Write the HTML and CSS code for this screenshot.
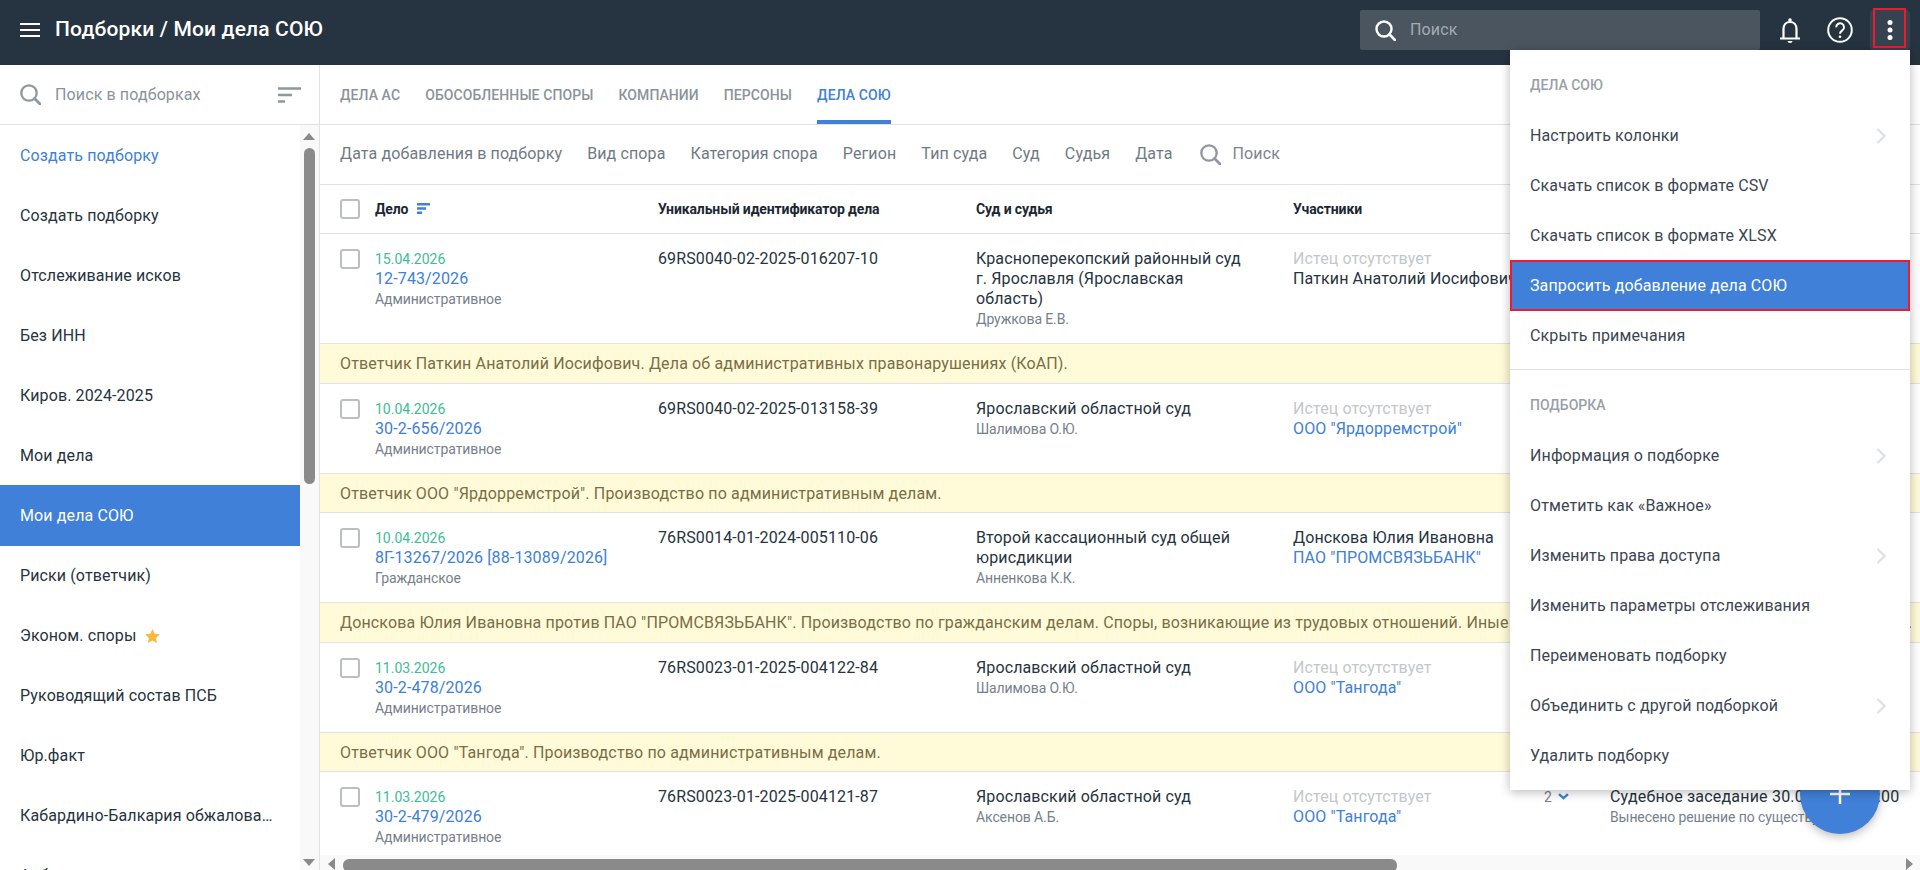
FILE: index.html
```html
<!DOCTYPE html>
<html lang="ru">
<head>
<meta charset="utf-8">
<title>Подборки / Мои дела СОЮ</title>
<link rel="stylesheet" href="styles.css">
</head>
<body>
<div class="app">
  <header class="topbar">
    <svg class="burger" width="20" height="14" viewBox="0 0 20 14"><path d="M0 1h20M0 7h20M0 13h20" stroke="#fff" stroke-width="2" fill="none"/></svg>
    <h1 class="title">Подборки / Мои дела СОЮ</h1>
    <div class="topsearch">
      <svg class="topsearch-icon" width="21" height="21" viewBox="0 0 21 21"><circle cx="9" cy="9" r="7.5" fill="none" stroke="#fff" stroke-width="2.4"/><path d="M14.5 14.5L20 20" stroke="#fff" stroke-width="2.6" stroke-linecap="round"/></svg>
      <span>Поиск</span>
    </div>
    <svg class="bell" width="20" height="25" viewBox="0 0 20 25"><path d="M3.5 20V11C3.500 7 6 4 10 4s6.500 3 6.500 7v9" fill="none" stroke="#fff" stroke-width="2.200"/><path d="M0.500 20.500h19" stroke="#fff" stroke-width="2.200" stroke-linecap="round"/><circle cx="10" cy="2" r="1.800" fill="#fff"/><path d="M7.500 23h5a2.500 2 0 0 1-5 0z" fill="#fff"/></svg>
    <svg class="help" width="26" height="26" viewBox="0 0 26 26"><circle cx="13" cy="13" r="11.800" fill="none" stroke="#fff" stroke-width="2"/><path d="M9.200 10.200a3.900 3.900 0 1 1 6.100 3.200c-1.500 1-2.300 1.700-2.300 3.300" fill="none" stroke="#fff" stroke-width="2"/><circle cx="13" cy="19.700" r="1.300" fill="#fff"/></svg>
    <div class="morebtn">
      <svg width="6" height="20" viewBox="0 0 6 20"><circle cx="3" cy="2.500" r="2.500" fill="#fff"/><circle cx="3" cy="10" r="2.500" fill="#fff"/><circle cx="3" cy="17.500" r="2.500" fill="#fff"/></svg>
      <span class="redbox"></span>
    </div>
  </header>

  <div class="body">
    <aside class="sidebar">
      <div class="side-search">
        <svg width="21" height="21" viewBox="0 0 21 21"><circle cx="9" cy="9" r="7.700" fill="none" stroke="#8f989f" stroke-width="2.300"/><path d="M14.500 14.500L20 20" stroke="#8f989f" stroke-width="2.800" stroke-linecap="round"/></svg>
        <span class="side-search-text">Поиск в подборках</span>
        <svg width="23" height="16" viewBox="0 0 23 16"><path d="M0 1.500h23M0 8h14M0 14.500h7" stroke="#8f989f" stroke-width="2.600" fill="none"/></svg>
      </div>
      <div class="side-body">
        <ul class="side-list">
          <li class="side-item side-item-link">Создать подборку</li>
          <li class="side-item">Создать подборку</li>
          <li class="side-item">Отслеживание исков</li>
          <li class="side-item">Без ИНН</li>
          <li class="side-item">Киров. 2024-2025</li>
          <li class="side-item">Мои дела</li>
          <li class="side-item side-item-active">Мои дела СОЮ</li>
          <li class="side-item">Риски (ответчик)</li>
          <li class="side-item">Эконом. споры
            <svg class="star" width="15" height="14" viewBox="0 0 24 23"><path d="M12 0l3.600 7.800 8.400 1-6.200 5.800 1.700 8.400L12 18.800 4.500 23l1.700-8.400L0 8.800l8.400-1z" fill="#f9b93c"/></svg>
          </li>
          <li class="side-item">Руководящий состав ПСБ</li>
          <li class="side-item">Юр.факт</li>
          <li class="side-item">Кабардино-Балкария обжалова…</li>
          <li class="side-item">Арбитраж</li>
        </ul>
        <div class="vscroll">
          <span class="arrow-up"></span>
          <span class="vthumb"></span>
          <span class="arrow-down"></span>
        </div>
      </div>
    </aside>

    <main class="content">
      <nav class="tabs">
        <span class="tab">Дела АС</span>
        <span class="tab">Обособленные споры</span>
        <span class="tab">Компании</span>
        <span class="tab">Персоны</span>
        <span class="tab tab-active">Дела СОЮ</span>
      </nav>
      <div class="filters">
        <span>Дата добавления в подборку</span>
        <span>Вид спора</span>
        <span>Категория спора</span>
        <span>Регион</span>
        <span>Тип суда</span>
        <span>Суд</span>
        <span>Судья</span>
        <span>Дата</span>
        <span class="filter-search">
          <svg width="21" height="21" viewBox="0 0 21 21"><circle cx="9" cy="9" r="7.700" fill="none" stroke="#8f989f" stroke-width="2.300"/><path d="M14.500 14.500L20 20" stroke="#8f989f" stroke-width="2.800" stroke-linecap="round"/></svg>
          Поиск
        </span>
      </div>

      <div class="table">
        <div class="grid thead">
          <div class="cell-first"><span class="check"></span><b>Дело</b>
            <svg class="thsort" width="13" height="11" viewBox="0 0 13 11"><path d="M0 1.200h13M0 5.500h9M0 9.800h5" stroke="#4080d8" stroke-width="2.400" fill="none"/></svg>
          </div>
          <b>Уникальный идентификатор дела</b>
          <b>Суд и судья</b>
          <b>Участники</b>
        </div>

        <div class="grid row row-tall">
          <div class="cell-first"><span class="check"></span>
            <div><div class="date">15.04.2026</div><div class="link">12-743/2026</div><div class="small">Административное</div></div>
          </div>
          <div>69RS0040-02-2025-016207-10</div>
          <div class="court">Красноперекопский районный суд г. Ярославля (Ярославская область)<div class="small">Дружкова Е.В.</div></div>
          <div class="nowrap"><div class="muted">Истец отсутствует</div>Паткин Анатолий Иосифович</div>
        </div>
        <div class="note">Ответчик Паткин Анатолий Иосифович. Дела об административных правонарушениях (КоАП).</div>

        <div class="grid row">
          <div class="cell-first"><span class="check"></span>
            <div><div class="date">10.04.2026</div><div class="link">30-2-656/2026</div><div class="small">Административное</div></div>
          </div>
          <div>69RS0040-02-2025-013158-39</div>
          <div class="court">Ярославский областной суд<div class="small">Шалимова О.Ю.</div></div>
          <div class="nowrap"><div class="muted">Истец отсутствует</div><div class="link">ООО "Ярдорремстрой"</div></div>
        </div>
        <div class="note note-short">Ответчик ООО "Ярдорремстрой". Производство по административным делам.</div>

        <div class="grid row">
          <div class="cell-first"><span class="check"></span>
            <div><div class="date">10.04.2026</div><div class="link">8Г-13267/2026 [88-13089/2026]</div><div class="small">Гражданское</div></div>
          </div>
          <div>76RS0014-01-2024-005110-06</div>
          <div class="court">Второй кассационный суд общей юрисдикции<div class="small">Анненкова К.К.</div></div>
          <div class="nowrap"><div>Донскова Юлия Ивановна</div><div class="link">ПАО "ПРОМСВЯЗЬБАНК"</div></div>
        </div>
        <div class="note note-long"><span>Донскова Юлия Ивановна против ПАО "ПРОМСВЯЗЬБАНК". Производство по гражданским делам. Споры, возникающие из трудовых отношений. Иные споры из трудовых</span><span>.</span></div>

        <div class="grid row">
          <div class="cell-first"><span class="check"></span>
            <div><div class="date">11.03.2026</div><div class="link">30-2-478/2026</div><div class="small">Административное</div></div>
          </div>
          <div>76RS0023-01-2025-004122-84</div>
          <div class="court">Ярославский областной суд<div class="small">Шалимова О.Ю.</div></div>
          <div class="nowrap"><div class="muted">Истец отсутствует</div><div class="link">ООО "Тангода"</div></div>
        </div>
        <div class="note note-short">Ответчик ООО "Тангода". Производство по административным делам.</div>

        <div class="grid row">
          <div class="cell-first"><span class="check"></span>
            <div><div class="date">11.03.2026</div><div class="link">30-2-479/2026</div><div class="small">Административное</div></div>
          </div>
          <div>76RS0023-01-2025-004121-87</div>
          <div class="court">Ярославский областной суд<div class="small">Аксенов А.Б.</div></div>
          <div class="nowrap"><div class="muted">Истец отсутствует</div><div class="link">ООО "Тангода"</div></div>
          <div class="count">2
            <svg width="11" height="7" viewBox="0 0 11 7"><path d="M1 1.200l4.500 4 4.500-4" fill="none" stroke="#4080d8" stroke-width="2.400"/></svg>
          </div>
          <div class="event">Судебное заседание 30.04.2026 10:00<div class="small">Вынесено решение по существу</div></div>
        </div>
      </div>

      <div class="hscroll">
        <span class="arrow-left"></span>
        <span class="hthumb"></span>
        <span class="arrow-right"></span>
      </div>
    </main>
  </div>

  <div class="fab">
    <svg width="20" height="20" viewBox="0 0 20 20"><path d="M10 0v20M0 10h20" stroke="#fff" stroke-width="2.500"/></svg>
  </div>

  <div class="menu">
    <div class="menu-group">
      <div class="menu-head">Дела СОЮ</div>
      <div class="menu-item">Настроить колонки
        <svg class="chev" width="10" height="16" viewBox="0 0 10 16"><path d="M1.500 1l7 7-7 7" fill="none" stroke="#dfe2e4" stroke-width="2.400"/></svg>
      </div>
      <div class="menu-item">Скачать список в формате CSV</div>
      <div class="menu-item">Скачать список в формате XLSX</div>
      <div class="menu-item menu-item-on">Запросить добавление дела СОЮ</div>
      <div class="menu-item">Скрыть примечания</div>
    </div>
    <div class="menu-group menu-group-last">
      <div class="menu-head">Подборка</div>
      <div class="menu-item">Информация о подборке
        <svg class="chev" width="10" height="16" viewBox="0 0 10 16"><path d="M1.500 1l7 7-7 7" fill="none" stroke="#dfe2e4" stroke-width="2.400"/></svg>
      </div>
      <div class="menu-item">Отметить как «Важное»</div>
      <div class="menu-item">Изменить права доступа
        <svg class="chev" width="10" height="16" viewBox="0 0 10 16"><path d="M1.500 1l7 7-7 7" fill="none" stroke="#dfe2e4" stroke-width="2.400"/></svg>
      </div>
      <div class="menu-item">Изменить параметры отслеживания</div>
      <div class="menu-item">Переименовать подборку</div>
      <div class="menu-item">Объединить с другой подборкой
        <svg class="chev" width="10" height="16" viewBox="0 0 10 16"><path d="M1.500 1l7 7-7 7" fill="none" stroke="#dfe2e4" stroke-width="2.400"/></svg>
      </div>
      <div class="menu-item">Удалить подборку</div>
    </div>
  </div>
</div>
</body>
</html>
```

FILE: styles.css
```css
* { box-sizing: border-box; }
html, body { margin: 0; height: 100%; overflow: hidden; }
body { font-family: Roboto, "Liberation Sans", sans-serif; font-size: 16px; line-height: 20px; color: #263340; background: #fff; letter-spacing: .12px; }
ul { list-style: none; margin: 0; padding: 0; }
svg { display: block; flex: none; }

.app { position: relative; width: 1920px; height: 870px; overflow: hidden; display: flex; flex-direction: column; }

/* top bar */
.topbar { height: 65px; flex: none; background: #263340; color: #fff; display: flex; align-items: center; padding-left: 20px; }
.burger { margin: -5px 15px 0 0; }
.title { margin: -7px 0 0; font-size: 21px; font-weight: 500; line-height: 24px; letter-spacing: .15px; flex: 1; }
.topsearch { width: 400px; height: 40px; margin-top: -5px; background: #4a5560; border-radius: 2px; display: flex; align-items: center; padding-left: 15px; color: #a4abb2; }
.topsearch-icon { margin-right: 14px; }
.bell { margin: -4px 0 0 20px; }
.help { margin: -6px 0 0 27px; }
.morebtn { position: relative; width: 40px; height: 40px; margin: -5px 10px 0 17px; background: #36424f; border-radius: 4px; display: flex; align-items: center; justify-content: center; }
.redbox { position: absolute; left: 3px; top: -2px; width: 33px; height: 40px; border: 2px solid #ec1c2e; }

/* layout */
.body { flex: 1; min-height: 0; display: flex; }
.sidebar { width: 320px; flex: none; border-right: 1px solid #e0e2e4; display: flex; flex-direction: column; }
.side-search { height: 60px; flex: none; border-bottom: 1px solid #e0e2e4; display: flex; align-items: center; padding: 0 18px 0 20px; color: #8a939a; }
.side-search-text { flex: 1; padding-left: 14px; }
.side-body { flex: 1; min-height: 0; display: flex; }
.side-list { width: 300px; flex: none; overflow: hidden; }
.side-item { height: 60px; padding: 2px 20px 0; display: flex; align-items: center; gap: 8px; white-space: nowrap; }
.side-item-link { color: #4080d8; }
.side-item-active { background: #4080d8; color: #fff; height: 61px; margin-bottom: -1px; padding-top: 0; }
.vscroll { flex: 1; background: #f9f9f9; position: relative; }
.vthumb { position: absolute; left: 4px; top: 23px; width: 11px; height: 336px; border-radius: 6px; background: #8a8a8a; }
.arrow-up, .arrow-down { position: absolute; left: 3px; width: 0; height: 0; border-left: 6.500px solid transparent; border-right: 6.500px solid transparent; }
.arrow-up { top: 8px; border-bottom: 7px solid #8a8a8a; }
.arrow-down { bottom: 4px; border-top: 7px solid #8a8a8a; }

/* content */
.content { flex: 1; min-width: 0; display: flex; flex-direction: column; }
.tabs { height: 60px; flex: none; border-bottom: 1px solid #e0e2e4; display: flex; gap: 25px; padding-left: 20px; }
.tab { height: 60px; line-height: 60px; font-size: 14px; font-weight: 500; text-transform: uppercase; color: #8a939a; letter-spacing: .09px; }
.tab-active { color: #4080d8; border-bottom: 4px solid #4080d8; height: 59px; }
.filters { height: 60px; flex: none; border-bottom: 1px solid #e0e2e4; display: flex; align-items: center; gap: 25px; padding: 0 20px 1px; color: #6f7a84; }
.filter-search { display: flex; align-items: center; gap: 12px; color: #7d868e; margin-left: 2px; }

.table { flex: 1; min-height: 0; overflow: hidden; }
.grid { display: grid; grid-template-columns: 338px 318px 317px 251px 66px 310px; }
.thead { height: 48.500px; border-bottom: 1px solid #e0e2e4; align-items: center; padding-top: 1px; font-size: 14px; letter-spacing: -.12px; }
.thead b { font-weight: 700; color: #1c2733; }
.cell-first { display: flex; padding-left: 20px; align-items: flex-start; }
.thead .cell-first { align-items: center; }
.check { width: 20px; height: 20px; flex: none; border: 2px solid #bcbfc2; border-radius: 3px; margin-right: 15px; }
.thsort { margin-left: 9px; margin-top: -2px; }
.row { height: 90px; padding-top: 15px; border-bottom: 1px solid #e0e2e4; color: #263340; }
.row-tall { height: 110px; }
.date { font-size: 14px; color: #3dbd96; letter-spacing: 0; }
.link { color: #4080d8; }
.small { font-size: 14px; color: #76818b; letter-spacing: -.1px; }
.court { padding-right: 48px; }
.muted { color: #c4c7ca; }
.nowrap { white-space: nowrap; }
.count { color: #76818b; font-size: 14px; display: flex; align-items: center; gap: 6px; height: 20px; }
.event { white-space: nowrap; letter-spacing: .2px; }
.note { height: 40px; padding: 0 20px; background: #fffbd8; border-bottom: 1px solid #e0e2e4; color: #7b6d47; line-height: 39px; white-space: nowrap; letter-spacing: .145px; }
.note-short { height: 39px; }
.note-long { display: flex; justify-content: space-between; padding-right: 8px; }

.hscroll { height: 15px; flex: none; background: #f9f9f9; position: relative; overflow: hidden; }
.hthumb { position: absolute; left: 23px; top: 4px; width: 1054px; height: 13px; border-radius: 6px; background: #8a8a8a; }
.arrow-left, .arrow-right { position: absolute; top: 3px; width: 0; height: 0; border-top: 6.500px solid transparent; border-bottom: 6.500px solid transparent; }
.arrow-left { left: 8px; border-right: 7px solid #8a8a8a; }
.arrow-right { right: 7px; border-left: 7px solid #8a8a8a; }

/* floating */
.fab { position: absolute; left: 1800px; top: 754px; width: 80px; height: 80px; border-radius: 50%; background: #4080d8; box-shadow: 0 3px 8px rgba(0,0,0,.25); display: flex; align-items: center; justify-content: center; }
.menu { position: absolute; left: 1510px; top: 50px; width: 400px; background: #fff; box-shadow: 0 2px 10px rgba(0,0,0,.28); padding: 10px 0; color: #3b4652; }
.menu-group { padding-bottom: 9px; border-bottom: 1px solid #e0e2e4; margin-bottom: 10px; }
.menu-group-last { padding-bottom: 0; border-bottom: 0; margin-bottom: 0; }
.menu-head { height: 50px; line-height: 50px; padding-left: 20px; font-size: 14px; font-weight: 500; text-transform: uppercase; color: #98a0a7; letter-spacing: 0; }
.menu-item { height: 50px; padding: 2px 24px 0 20px; display: flex; align-items: center; justify-content: space-between; }
.menu-item-on { background: #4080d8; color: #fff; border: 2px solid #ec1c2e; padding: 0 22px 0 18px; height: 51px; margin-bottom: -1px; }
```
